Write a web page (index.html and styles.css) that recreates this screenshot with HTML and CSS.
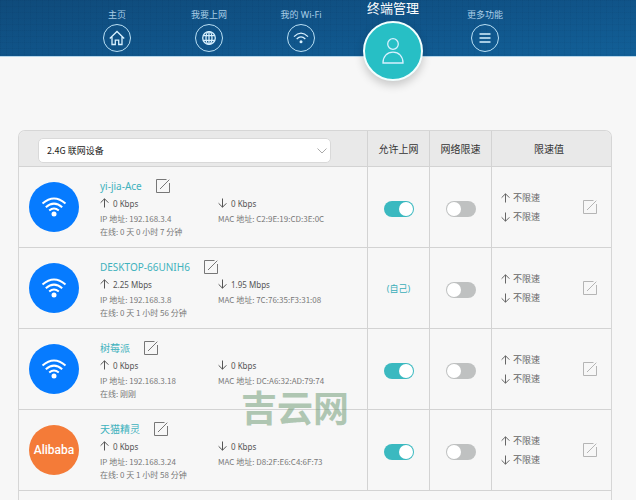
FILE: index.html
```html
<!DOCTYPE html>
<html lang="zh-CN">
<head>
    <meta charset="UTF-8">
    <meta name="viewport" content="width=device-width, initial-scale=1">
    <title>终端管理</title>
    <link rel="stylesheet" href="styles.css">
</head>
<body>
    <svg class="sprite" aria-hidden="true">
        <symbol id="edit" viewBox="0 0 14 14"><path d="M10.5 .5H.5v13h13V4M4 10 13.300 .7" /></symbol>
        <symbol id="up" viewBox="0 0 9 10"><path d="M4.500 9.500V.8M.6 4.700 4.500 .8l3.900 3.900" /></symbol>
        <symbol id="down" viewBox="0 0 9 10"><path d="M4.500 .5v8.700M.6 5.300l3.900 3.900 3.900-3.900" /></symbol>
        <symbol id="wifi" viewBox="0 0 26 20"><path d="M1.500 6.500Q13-3.500 24.500 6.500M4.800 10.200Q13 3 21.200 10.200M8.200 13.600Q13 9.500 17.800 13.600" /><circle cx="13" cy="17" r="2.500" /></symbol>
    </svg>

    <header class="topbar">
        <nav class="menu">
            <a class="menu-item" href="#">
                <span class="menu-label">主页</span>
                <span class="menu-icon"><svg width="16" height="16" viewBox="0 0 16 16"><path d="M.8 8.500 8 1.500l7.200 7M3 7v7.500h3.300v-4.300h3.400v4.300H13V7" /></svg></span>
            </a>
            <a class="menu-item" href="#">
                <span class="menu-label">我要上网</span>
                <span class="menu-icon"><svg width="14" height="14" viewBox="0 0 14 14"><circle cx="7" cy="7" r="6.300" /><ellipse cx="7" cy="7" rx="3" ry="6.300" /><path d="M7 .7v12.600M1.300 4.700h11.400M1.300 9.300h11.400" /></svg></span>
            </a>
            <a class="menu-item" href="#">
                <span class="menu-label">我的 Wi-Fi</span>
                <span class="menu-icon"><svg width="16" height="12" viewBox="0 0 16 12"><path d="M1 4.600Q8-2.400 15 4.600M3.700 7Q8 2.800 12.300 7" /><circle class="dot" cx="8" cy="9.700" r="1.500" /></svg></span>
            </a>
            <a class="menu-item active" href="#">
                <span class="menu-label">终端管理</span>
                <span class="menu-icon"><svg width="22" height="26" viewBox="0 0 22 26"><circle cx="11" cy="6" r="5.300" /><path d="M1 25c0-6.500 4-10.800 10-10.800S21 18.500 21 25z" /></svg></span>
            </a>
            <a class="menu-item" href="#">
                <span class="menu-label">更多功能</span>
                <span class="menu-icon"><svg width="12" height="10" viewBox="0 0 12 10"><path d="M.5 1h11M.5 5h11M.5 9h11" /></svg></span>
            </a>
        </nav>
    </header>

    <main class="devices">
        <table class="device-table">
            <thead>
                <tr>
                    <th class="col-device">
                        <div class="picker">
                            <select class="picker-select" aria-label="设备类型"><option>2.4G 联网设备</option></select>
                            <svg class="picker-arrow" width="10" height="6" viewBox="0 0 10 6"><path d="M.5 .5 5 5l4.500-4.500" /></svg>
                        </div>
                    </th>
                    <th class="col-switch">允许上网</th>
                    <th class="col-switch">网络限速</th>
                    <th class="col-limit">限速值</th>
                </tr>
            </thead>
            <tbody>
                <tr>
                    <td>
                        <div class="device">
                            <span class="avatar"><svg class="wifi"><use href="#wifi" /></svg></span>
                            <div class="info">
                                <div class="name">yi-jia-Ace <button class="edit" aria-label="编辑名称"><svg><use href="#edit" /></svg></button></div>
                                <div class="speed"><svg class="arrow"><use href="#up" /></svg>0 Kbps</div>
                                <div class="speed"><svg class="arrow"><use href="#down" /></svg>0 Kbps</div>
                                <div>IP 地址: 192.168.3.4</div>
                                <div>MAC 地址: C2:9E:19:CD:3E:0C</div>
                                <div>在线: 0 天 0 小时 7 分钟</div>
                            </div>
                        </div>
                    </td>
                    <td class="center"><input class="switch" type="checkbox" aria-label="允许上网" checked></td>
                    <td class="center"><input class="switch" type="checkbox" aria-label="网络限速"></td>
                    <td>
                        <div class="limit">
                            <div class="limit-values">
                                <div class="limit-line"><svg class="arrow"><use href="#up" /></svg>不限速</div>
                                <div class="limit-line"><svg class="arrow"><use href="#down" /></svg>不限速</div>
                            </div>
                            <button class="edit light" aria-label="编辑限速"><svg><use href="#edit" /></svg></button>
                        </div>
                    </td>
                </tr>
                <tr>
                    <td>
                        <div class="device">
                            <span class="avatar"><svg class="wifi"><use href="#wifi" /></svg></span>
                            <div class="info">
                                <div class="name">DESKTOP-66UNIH6 <button class="edit" aria-label="编辑名称"><svg><use href="#edit" /></svg></button></div>
                                <div class="speed"><svg class="arrow"><use href="#up" /></svg>2.25 Mbps</div>
                                <div class="speed"><svg class="arrow"><use href="#down" /></svg>1.95 Mbps</div>
                                <div>IP 地址: 192.168.3.8</div>
                                <div>MAC 地址: 7C:76:35:F3:31:08</div>
                                <div>在线: 0 天 1 小时 56 分钟</div>
                            </div>
                        </div>
                    </td>
                    <td class="self">(自己)</td>
                    <td class="center"><input class="switch" type="checkbox" aria-label="网络限速"></td>
                    <td>
                        <div class="limit">
                            <div class="limit-values">
                                <div class="limit-line"><svg class="arrow"><use href="#up" /></svg>不限速</div>
                                <div class="limit-line"><svg class="arrow"><use href="#down" /></svg>不限速</div>
                            </div>
                            <button class="edit light" aria-label="编辑限速"><svg><use href="#edit" /></svg></button>
                        </div>
                    </td>
                </tr>
                <tr>
                    <td>
                        <div class="device">
                            <span class="avatar"><svg class="wifi"><use href="#wifi" /></svg></span>
                            <div class="info">
                                <div class="name">树莓派 <button class="edit" aria-label="编辑名称"><svg><use href="#edit" /></svg></button></div>
                                <div class="speed"><svg class="arrow"><use href="#up" /></svg>0 Kbps</div>
                                <div class="speed"><svg class="arrow"><use href="#down" /></svg>0 Kbps</div>
                                <div>IP 地址: 192.168.3.18</div>
                                <div>MAC 地址: DC:A6:32:AD:79:74</div>
                                <div>在线: 刚刚</div>
                            </div>
                        </div>
                    </td>
                    <td class="center"><input class="switch" type="checkbox" aria-label="允许上网" checked></td>
                    <td class="center"><input class="switch" type="checkbox" aria-label="网络限速"></td>
                    <td>
                        <div class="limit">
                            <div class="limit-values">
                                <div class="limit-line"><svg class="arrow"><use href="#up" /></svg>不限速</div>
                                <div class="limit-line"><svg class="arrow"><use href="#down" /></svg>不限速</div>
                            </div>
                            <button class="edit light" aria-label="编辑限速"><svg><use href="#edit" /></svg></button>
                        </div>
                    </td>
                </tr>
                <tr>
                    <td>
                        <div class="device">
                            <span class="avatar alibaba">Alibaba</span>
                            <div class="info">
                                <div class="name">天猫精灵 <button class="edit" aria-label="编辑名称"><svg><use href="#edit" /></svg></button></div>
                                <div class="speed"><svg class="arrow"><use href="#up" /></svg>0 Kbps</div>
                                <div class="speed"><svg class="arrow"><use href="#down" /></svg>0 Kbps</div>
                                <div>IP 地址: 192.168.3.24</div>
                                <div>MAC 地址: D8:2F:E6:C4:6F:73</div>
                                <div>在线: 0 天 1 小时 58 分钟</div>
                            </div>
                        </div>
                    </td>
                    <td class="center"><input class="switch" type="checkbox" aria-label="允许上网" checked></td>
                    <td class="center"><input class="switch" type="checkbox" aria-label="网络限速"></td>
                    <td>
                        <div class="limit">
                            <div class="limit-values">
                                <div class="limit-line"><svg class="arrow"><use href="#up" /></svg>不限速</div>
                                <div class="limit-line"><svg class="arrow"><use href="#down" /></svg>不限速</div>
                            </div>
                            <button class="edit light" aria-label="编辑限速"><svg><use href="#edit" /></svg></button>
                        </div>
                    </td>
                </tr>
            </tbody>
        </table>
    </main>
    <div class="watermark">吉云网</div>
</body>
</html>
```
FILE: styles.css
```css
* {
    box-sizing: border-box;
}
body {
    display: flex;
    flex-direction: column;
    min-height: 100vh;
    margin: 0;
    background-color: #f7f7f7;
    color: #777;
    font-family: "Noto Sans", "Noto Sans CJK SC", sans-serif;
    font-size: 8px;
    line-height: 13px;
}
svg {
    fill: none;
    stroke: currentColor;
}
.sprite {
    position: absolute;
    width: 0;
    height: 0;
}

/* Barra superior */
.topbar {
    height: 57px;
    border-bottom: 1px solid #b5d6ea;
    background-color: #105a91;
    background-image:
        repeating-linear-gradient(to right, rgba(0, 20, 50, 0.04) 0 1px, transparent 1px 6px),
        repeating-linear-gradient(to bottom, rgba(0, 20, 50, 0.04) 0 1px, transparent 1px 6px),
        linear-gradient(to bottom right, #0f4b7b, #105489 50%, #126098);
}
.menu {
    display: flex;
    align-items: flex-start;
    padding: 0 105px 0 71px;
}
.menu-item {
    display: flex;
    flex: 1;
    flex-direction: column;
    align-items: center;
    gap: 3px;
    padding-top: 9px;
    color: #d8f1ff;
    text-decoration: none;
}
.menu-label {
    color: #a9cde6;
    font-size: 9px;
    line-height: 12px;
}
.menu-icon {
    display: flex;
    align-items: center;
    justify-content: center;
    width: 28px;
    height: 28px;
    border: 1px solid #b9e0f5;
    border-radius: 50%;
}
.menu-icon svg {
    stroke-width: 1.3;
}
.menu-icon .dot {
    fill: currentColor;
    stroke: none;
}
.menu-item.active {
    gap: 5px;
    padding-top: 0;
}
.active .menu-label {
    color: #fff;
    font-size: 13px;
    line-height: 16px;
}
.active .menu-icon {
    width: 60px;
    height: 60px;
    border: 2px solid #f2ffff;
    background-color: #27bfc5;
    box-shadow: 0 4px 10px rgba(0, 0, 0, 0.2);
}

/* Tabla de dispositivos */
.devices {
    flex: 1;
    margin: 73px 24px 0 18px;
    border: 1px solid #d6d6d6;
    border-bottom: 0;
    border-radius: 7px 7px 0 0;
    overflow: hidden;
}
.device-table {
    width: 100%;
    border-spacing: 0;
    table-layout: fixed;
}
th,
td {
    padding: 0;
    border-bottom: 1px solid #d3d3d3;
    border-left: 1px solid #d3d3d3;
}
th:first-child,
td:first-child {
    border-left: 0;
}
th {
    height: 36px;
    padding-top: 2px;
    background-color: #e9e9e9;
    color: #333;
    font-size: 10px;
    font-weight: 400;
}
td {
    height: 81px;
}
.col-switch {
    width: 62px;
}
.col-limit {
    width: 120px;
    padding-right: 5px;
}
.center {
    padding-top: 4px;
    text-align: center;
}
.self {
    color: #3aaeb9;
    font-size: 9px;
    text-align: center;
}

.picker {
    display: grid;
    align-items: center;
    margin: 2px 36px 0 19px;
}
.picker-select,
.picker-arrow {
    grid-area: 1 / 1;
}
.picker-select {
    width: 100%;
    height: 25px;
    padding: 0 8px;
    appearance: none;
    border: 1px solid #d9d9d9;
    border-radius: 5px;
    background-color: #fff;
    color: #222;
    font-family: "Noto Sans CJK SC", sans-serif;
    font-size: 9px;
}
.picker-arrow {
    justify-self: end;
    margin-right: 4px;
    color: #aaa;
    pointer-events: none;
}

.device {
    display: flex;
    align-items: center;
    gap: 21px;
    padding-left: 10px;
}
.avatar {
    display: flex;
    flex: none;
    align-items: center;
    justify-content: center;
    width: 50px;
    height: 50px;
    border-radius: 50%;
    background-color: #067bff;
    color: #fff;
}
.alibaba {
    background-color: #f47b38;
    font-family: Roboto, sans-serif;
    font-size: 12px;
    font-weight: 500;
}
.wifi {
    width: 26px;
    height: 20px;
    stroke-width: 2;
}
#wifi circle {
    fill: currentColor;
    stroke: none;
}
.info {
    display: grid;
    grid-template-columns: 118px 1fr;
    flex: 1;
    font-family: "Noto Sans CJK SC", sans-serif;
    white-space: nowrap;
}
.name {
    display: flex;
    grid-column: 1 / 3;
    align-items: center;
    gap: 14px;
    color: #3fb2bd;
    font-family: "Noto Sans", "Noto Sans CJK SC", sans-serif;
    font-size: 10px;
    line-height: 18px;
}
.speed {
    display: flex;
    align-items: center;
    gap: 4px;
    color: #555;
    font-family: "Noto Sans", sans-serif;
    line-height: 17px;
}
.arrow {
    width: 9px;
    height: 10px;
}
.edit {
    width: 14px;
    height: 14px;
    padding: 0;
    border: 0;
    background: none;
    color: #777;
    cursor: pointer;
}
.edit svg {
    display: block;
    width: 14px;
    height: 14px;
}
.edit.light {
    color: #b5b5b5;
}

.switch {
    width: 30px;
    height: 16px;
    margin: 0;
    padding: 1px;
    appearance: none;
    border-radius: 8px;
    background-color: #bfc1c1;
    vertical-align: middle;
    cursor: pointer;
}
.switch::before {
    content: "";
    display: block;
    width: 14px;
    height: 14px;
    border-radius: 50%;
    background-color: #fff;
}
.switch:checked {
    background-color: #3bb9c0;
}
.switch:checked::before {
    margin-left: auto;
}

.limit {
    display: flex;
    align-items: center;
    justify-content: space-between;
    padding: 0 14px 0 9px;
}
.limit-line {
    display: flex;
    align-items: center;
    gap: 3px;
    color: #666;
    font-size: 9px;
    line-height: 19px;
}

.watermark {
    position: absolute;
    top: 390px;
    left: 241px;
    color: rgba(104, 150, 110, 0.5);
    font-family: "Noto Sans CJK SC", sans-serif;
    font-size: 36px;
    font-weight: 700;
    line-height: 32px;
    pointer-events: none;
}
```
